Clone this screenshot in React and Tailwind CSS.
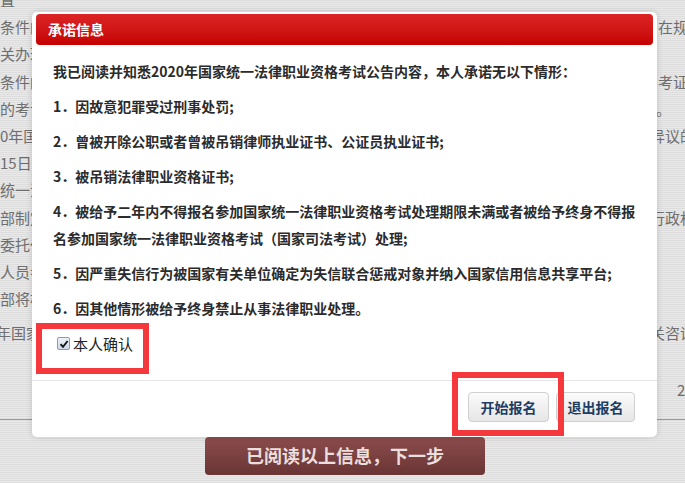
import React from 'react';

const pageRows = [
  { left: '置', right: '', rightPad: 'pl-[8px]' },
  { left: '条件的', right: '在规', rightPad: 'pl-[8px]' },
  { left: '关办理', right: '', rightPad: 'pl-[8px]' },
  { left: '条件的', right: '考证', rightPad: 'pl-[8px]' },
  { left: '的考证', right: '。', rightPad: 'pl-[6px]' },
  { left: '0年国家', right: '异议的', rightPad: 'pl-[0px]' },
  { left: '15日', right: '', rightPad: 'pl-[8px]' },
  { left: '统一法', right: '', rightPad: 'pl-[8px]' },
  { left: '部制定', right: '行政机', rightPad: 'pl-[0px]' },
  { left: '委托代', right: '', rightPad: 'pl-[8px]' },
  { left: '人员参', right: '', rightPad: 'pl-[8px]' },
  { left: '部将根', right: '', rightPad: 'pl-[8px]' },
];

const items = [
  '1．因故意犯罪受过刑事处罚;',
  '2．曾被开除公职或者曾被吊销律师执业证书、公证员执业证书;',
  '3．被吊销法律职业资格证书;',
  '4．被给予二年内不得报名参加国家统一法律职业资格考试处理期限未满或者被给予终身不得报名参加国家统一法律职业资格考试（国家司法考试）处理;',
  '5．因严重失信行为被国家有关单位确定为失信联合惩戒对象并纳入国家信用信息共享平台;',
  '6．因其他情形被给予终身禁止从事法律职业处理。',
];

function Checkbox() {
  return (
    <span className="w-[13px] h-[13px] border border-[#8a9bb5] rounded-[2px] bg-gradient-to-b from-[#eef2f8] to-[#cdd8e8] flex items-center justify-center">
      <svg width="10" height="10" viewBox="0 0 10 10">
        <path d="M1.5 5.2 L4 7.8 L8.6 2" fill="none" stroke="#111" strokeWidth="1.8" />
      </svg>
    </span>
  );
}

export default function App() {
  return (
    <div className="relative w-[685px] h-[483px] overflow-hidden bg-[repeating-linear-gradient(180deg,#dddddd_0px,#dddddd_1px,#e9e9e9_1px,#e9e9e9_2px)] font-['Noto_Sans_CJK_SC',sans-serif]">
      {/* page behind the dialog */}
      <div className="-mt-[14px] text-[15px] text-[#6e6e6e]">
        {pageRows.map((row, i) => (
          <div key={i} className="flex h-[27.2px] leading-[27.2px] whitespace-nowrap">
            <span className="w-[650px] shrink-0 overflow-hidden">{row.left}</span>
            <span className={row.rightPad}>{row.right}</span>
          </div>
        ))}
        <div className="flex h-[27.2px] leading-[27.2px] mt-[7px] whitespace-nowrap">
          <span className="w-[650px] shrink-0 overflow-hidden -ml-[4px]">年国家</span>
          <span className="pl-[4px]">关咨询</span>
        </div>
        <div className="flex h-[27.2px] leading-[27.2px] mt-[30px] whitespace-nowrap">
          <span className="w-[677px] shrink-0"></span>
          <span>2</span>
        </div>
        <div className="mt-[15px] border-t border-[#9a9a9a]"></div>
        <div className="mt-[17px] ml-[205px] w-[280px] h-[38px] rounded-[4px] bg-gradient-to-b from-[#8c4c4c] to-[#6a3535] flex items-center justify-center text-[18px] font-bold text-[#eadede]">
          已阅读以上信息，下一步
        </div>
      </div>

      {/* dialog */}
      <div className="absolute left-[32px] top-[12px] w-[625px] h-[425px] bg-white rounded-[5px] shadow-[0_0_6px_rgba(0,0,0,0.15)] flex flex-col">
        <div className="mx-[4px] mt-[2px] h-[31px] rounded-[4px] bg-gradient-to-b from-[#dc2424] to-[#c50000] flex items-center pl-[12px] text-[14px] font-bold text-white">
          承诺信息
        </div>
        <div className="pl-[21px] pt-[13px] w-[611px] text-[14px] font-bold text-[#2b2b2b] leading-[27px]">
          <p className="mb-[8px]">我已阅读并知悉2020年国家统一法律职业资格考试公告内容，本人承诺无以下情形：</p>
          {items.map((t, i) => (
            <p key={i} className="mb-[8px]">{t}</p>
          ))}
          <label className="mt-[4px] h-[27px] flex items-center gap-[3px] pl-[4px] text-[15px] font-normal text-[#222]">
            <Checkbox />
            本人确认
          </label>
        </div>
        <div className="mt-auto border-t border-[#e5e5e5] pt-[11px] pb-[15px] pr-[22px] flex justify-end gap-[7px]">
          <button className="w-[81px] h-[30px] rounded-[4px] border border-[#d0d0d0] bg-gradient-to-b from-[#fbfbfb] to-[#e6e6e6] text-[14px] font-bold text-[#1d3d63]">
            开始报名
          </button>
          <button className="w-[79px] h-[30px] rounded-[4px] border border-[#d0d0d0] bg-gradient-to-b from-[#fbfbfb] to-[#e6e6e6] text-[14px] font-bold text-[#1d3d63]">
            退出报名
          </button>
        </div>
      </div>

      {/* red annotation boxes */}
      <div className="absolute left-[36px] top-[323px] w-[113px] h-[51px] border-[6px] border-[#f4383c]"></div>
      <div className="absolute left-[452px] top-[372px] w-[112px] h-[64px] border-[6px] border-[#f4383c]"></div>
    </div>
  );
}
